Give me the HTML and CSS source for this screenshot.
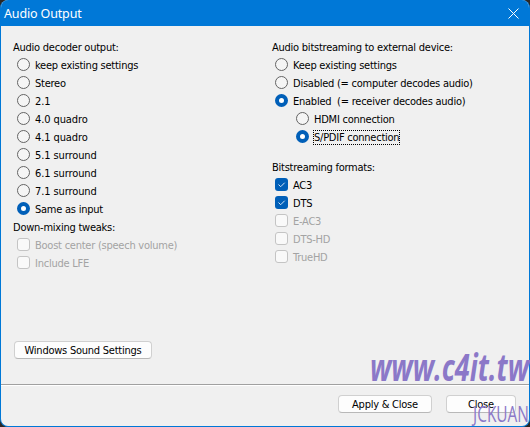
FILE: index.html
```html
<!DOCTYPE html>
<html lang="en">
<head>
  <meta charset="UTF-8">
  <meta name="viewport" content="width=device-width, initial-scale=1.0">
  <title>Audio Output</title>
  <link rel="stylesheet" href="styles.css">
</head>
<body>
  <div class="window">
    <header class="titlebar">
      <h1>Audio Output</h1>
      <svg class="close-icon" width="11" height="11" viewBox="0 0 11 11"><path d="M.5.5l10 10M10.500.500l-10 10"/></svg>
    </header>

    <main>
      <section class="column decoder">
        <h2>Audio decoder output:</h2>
        <div class="row"><i class="radio"></i><span>keep existing settings</span></div>
        <div class="row"><i class="radio"></i><span>Stereo</span></div>
        <div class="row"><i class="radio"></i><span class="num">2.1</span></div>
        <div class="row"><i class="radio"></i><span class="num">4.0 quadro</span></div>
        <div class="row"><i class="radio"></i><span class="num">4.1 quadro</span></div>
        <div class="row"><i class="radio"></i><span class="num">5.1 surround</span></div>
        <div class="row"><i class="radio"></i><span class="num">6.1 surround</span></div>
        <div class="row"><i class="radio"></i><span class="num">7.1 surround</span></div>
        <div class="row"><i class="radio on"></i><span>Same as input</span></div>
        <h2>Down-mixing tweaks:</h2>
        <div class="row disabled"><i class="check"></i><span>Boost center (speech volume)</span></div>
        <div class="row disabled"><i class="check"></i><span>Include LFE</span></div>
        <button class="sound">Windows Sound Settings</button>
      </section>

      <section class="column bitstream">
        <h2>Audio bitstreaming to external device:</h2>
        <div class="row"><i class="radio"></i><span>Keep existing settings</span></div>
        <div class="row"><i class="radio"></i><span>Disabled (= computer decodes audio)</span></div>
        <div class="row"><i class="radio on"></i><span>Enabled&nbsp; (= receiver decodes audio)</span></div>
        <div class="row sub"><i class="radio"></i><span>HDMI connection</span></div>
        <div class="row sub"><i class="radio on"></i><span class="focus">S/PDIF connection</span></div>
        <h2 class="formats">Bitstreaming formats:</h2>
        <div class="row"><i class="check on"><svg width="13" height="13" viewBox="0 0 13 13"><path d="M3.500 6.500l2.200 2.200L9.700 4.700"/></svg></i><span>AC3</span></div>
        <div class="row"><i class="check on"><svg width="13" height="13" viewBox="0 0 13 13"><path d="M3.500 6.500l2.200 2.200L9.700 4.700"/></svg></i><span>DTS</span></div>
        <div class="row disabled"><i class="check"></i><span>E-AC3</span></div>
        <div class="row disabled"><i class="check"></i><span>DTS-HD</span></div>
        <div class="row disabled"><i class="check"></i><span>TrueHD</span></div>
      </section>
    </main>

    <footer>
      <button class="apply">Apply &amp; Close</button>
      <button class="close">Close</button>
    </footer>
  </div>

  <!-- watermark over the dialog -->
  <svg class="watermark" width="162" height="85" viewBox="0 0 162 85">
    <text class="site" x="2" y="39" textLength="159" lengthAdjust="spacingAndGlyphs">www.c4it.tw</text>
    <text class="author" x="105" y="80" textLength="56" lengthAdjust="spacingAndGlyphs">JCKUAN</text>
  </svg>
</body>
</html>
```

FILE: styles.css
```css
* {
  box-sizing: border-box;
}

body {
  margin: 0;
  background: #2b2724;
  font-family: "DejaVu Sans Condensed", "DejaVu Sans", sans-serif;
  font-size: 11px;
  letter-spacing: -0.24px;
  color: #000;
  overflow: hidden;
}

.window {
  display: flex;
  flex-direction: column;
  height: 427px;
  border: 1px solid #0078d7;
  border-top: 0;
  border-radius: 8px;
  background: #f0f0f0;
  overflow: hidden;
}

/* title bar */
.titlebar {
  display: flex;
  align-items: center;
  justify-content: space-between;
  flex: none;
  height: 26px;
  padding: 0 10px 0 3px;
  background: #0078d7;
  color: #fff;
}

.titlebar h1 {
  margin: 0;
  font: 12.5px "Noto Sans", sans-serif;
  letter-spacing: -0.15px;
}

.close-icon {
  stroke: #fff;
  fill: none;
}

/* option columns */
main {
  display: flex;
  flex: 1;
  padding-top: 12px;
}

.column {
  display: flex;
  flex-direction: column;
}

.decoder {
  width: 258px;
  padding-left: 12px;
}

.bitstream {
  padding-left: 13px;
}

h2 {
  height: 18px;
  margin: 0;
  font-size: 11px;
  font-weight: normal;
  line-height: 20px;
  white-space: nowrap;
}

h2.formats {
  margin-top: 12px;
}

.row {
  display: flex;
  align-items: flex-start;
  gap: 5px;
  height: 18px;
  padding-left: 4px;
  line-height: 20px;
  white-space: nowrap;
}

.bitstream .row {
  padding-left: 3px;
}

.bitstream .row.sub {
  padding-left: 24px;
}

.num {
  letter-spacing: -0.1px;
}

.disabled {
  color: #a3a3a3;
}

.radio,
.check {
  flex: none;
  width: 13px;
  height: 13px;
  margin-top: 2px;
  border: 1px solid #646464;
  background: #f5f5f5;
}

.radio {
  border-radius: 50%;
}

.radio.on {
  border: 4px solid #005fb8;
  background: #fff;
}

.check {
  border-color: #c4c4c4;
  border-radius: 3px;
  background: #f9f9f9;
}

.check.on {
  border: 0;
  background: #005fb8;
}

.check svg {
  display: block;
  fill: none;
  stroke: #d5e6f6;
}

.focus {
  height: 15px;
  margin: 2px 0 0 -1px;
  padding: 0 1px;
  line-height: 16px;
  outline: 1px dotted #000;
  outline-offset: -1px;
}

/* buttons */
button {
  height: 18px;
  padding: 0;
  border: 1px solid #d0d0d0;
  border-bottom-color: #b8b8b8;
  border-radius: 4px;
  background: #fdfdfd;
  color: #000;
  font-family: inherit;
  font-size: 11px;
  letter-spacing: -0.24px;
  line-height: 15px;
}

.sound {
  width: 138px;
  margin: 69px 0 0 1px;
}

footer {
  display: flex;
  flex: none;
  gap: 14px;
  justify-content: flex-end;
  height: 42px;
  padding: 10px 13px 0 0;
  border-top: 1px solid #a0a0a0;
  box-shadow: inset 0 1px #fff;
}

.apply {
  width: 94px;
}

.close {
  width: 70px;
}

.watermark {
  position: absolute;
  right: 0;
  bottom: 0;
  fill: #8b78c8;
  letter-spacing: 0;
}

.site {
  font: italic bold 37px "Open Sans", sans-serif;
}

.author {
  font: 22px "Open Sans", sans-serif;
}
```
